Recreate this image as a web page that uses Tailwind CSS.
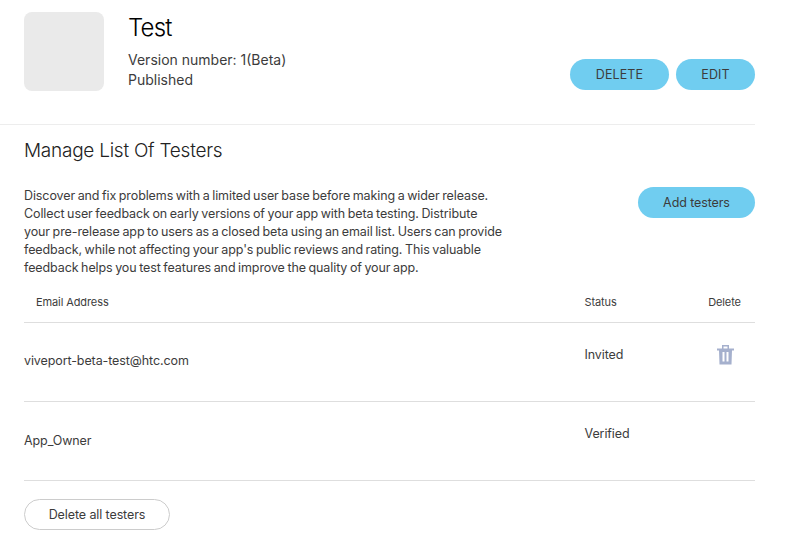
<!DOCTYPE html>
<html lang="en">
<head>
  <meta charset="UTF-8">
  <title>Manage List Of Testers</title>
  <script src="https://cdn.jsdelivr.net/npm/@tailwindcss/browser@4"></script>
</head>
<body class="bg-white h-[539px] overflow-hidden font-['Inter','Liberation_Sans',sans-serif] text-[12.5px] tracking-[-0.1px] leading-[18px] text-[#3c3c3c]">
  <div class="w-[755px]">

    <!-- App header -->
    <header class="flex h-[125px] pl-6 pt-3 border-b border-[#ededed]">
      <div class="w-20 h-[79px] rounded-lg bg-[#eaeaea]"></div>
      <div class="ml-6 whitespace-nowrap">
        <h1 class="pt-px text-[24px] leading-[30px] font-light text-black tracking-[-0.8px]">Test</h1>
        <p class="mt-[7px] text-[14px] leading-5 tracking-normal">Version number: 1(Beta)<br>Published</p>
      </div>
      <div class="ml-auto mt-[47px] flex gap-[7px]">
        <button class="w-[99px] h-[31px] rounded-full bg-[#70cdf0] tracking-[0.1px]">DELETE</button>
        <button class="w-[79px] h-[31px] rounded-full bg-[#70cdf0] tracking-[0.1px]">EDIT</button>
      </div>
    </header>

    <main class="pl-6">
      <h2 class="pt-[14px] text-[19px] leading-6 font-light text-[#222] tracking-[-0.25px]">Manage List Of Testers</h2>

      <div class="mt-[23px] flex justify-between">
        <p class="pt-px whitespace-nowrap [word-spacing:-0.8px]">
          Discover and fix problems with a limited user base before making a wider release.<br>
          Collect user feedback on early versions of your app with beta testing. Distribute<br>
          your pre-release app to users as a closed beta using an email list. Users can provide<br>
          feedback, while not affecting your app's public reviews and rating. This valuable<br>
          feedback helps you test features and improve the quality of your app.
        </p>
        <button class="mt-px w-[117px] h-[31px] rounded-full bg-[#70cdf0]">Add testers</button>
      </div>

      <!-- Testers table -->
      <div class="mt-[2px] grid grid-cols-[1fr_110px_61px] h-[44px] pt-[13px] border-b border-[#dedede] text-[11px] leading-5">
        <div class="pl-3">Email Address</div>
        <div class="pl-[0.5px]">Status</div>
        <div class="text-center">Delete</div>
      </div>
      <div class="grid grid-cols-[1fr_110px_61px] h-[79px] border-b border-[#dedede]">
        <div class="pt-[29px]">viveport-beta-test@htc.com</div>
        <div class="pt-[23px] pl-[0.5px]">Invited</div>
        <div class="pt-[22px] pl-0.5 flex justify-center items-start">
          <svg class="w-[17px] h-5" viewBox="0 0 17 20" fill="#a5b0cd">
            <path fill-rule="evenodd" d="M5 3.500V0h7V3.500h5v2H15l-0.500 14H2.500L2 5.500H0V3.500zM6.500 3.500h4V1.500h-4zM5.500 7v9.500h2V7zM9.500 7v9.500h2V7z"/>
          </svg>
        </div>
      </div>
      <div class="grid grid-cols-[1fr_110px_61px] h-[79px] border-b border-[#dedede]">
        <div class="pt-[30px]">App_Owner</div>
        <div class="pt-[23px] pl-[0.5px]">Verified</div>
      </div>

      <button class="mt-[18px] w-[146px] h-[31px] pt-px rounded-full border border-[#ccc]">Delete all testers</button>
    </main>
  </div>
</body>
</html>
